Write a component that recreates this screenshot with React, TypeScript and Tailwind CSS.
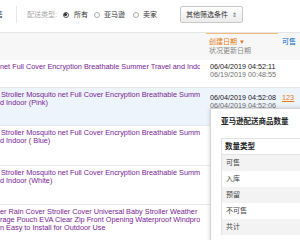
import React from "react";

function Radio({ checked, className }: { checked?: boolean; className?: string }) {
  return (
    <span
      className={
        "inline-flex items-center justify-center w-[6px] h-[6px] rounded-full border bg-white " +
        (checked ? "border-[#555] " : "border-[#aaa] ") +
        (className || "")
      }
    >
      {checked ? <span className="w-[3px] h-[3px] rounded-full bg-[#222]" /> : null}
    </span>
  );
}

type Row = {
  h: string;
  bg: string;
  lines: { t: string; ml: string }[];
  dates: string[];
  datePt: string;
  qty?: boolean;
};

const rows: Row[] = [
  {
    h: "h-[28px]",
    bg: "bg-white",
    lines: [{ t: "net Full Cover Encryption Breathable Summer Travel and Indoor", ml: "ml-0" }],
    dates: ["06/04/2019 04:52:11", "06/19/2019 00:48:55"],
    datePt: "pt-[3px]",
  },
  {
    h: "h-[38px]",
    bg: "bg-[#eef4fc]",
    lines: [
      { t: "Stroller Mosquito net Full Cover Encryption Breathable Summer", ml: "ml-[1px]" },
      { t: "d Indoor (Pink)", ml: "ml-0" },
    ],
    dates: ["06/04/2019 04:52:08", "06/04/2019 04:52:06"],
    datePt: "pt-[6px]",
    qty: true,
  },
  {
    h: "h-[40px]",
    bg: "bg-white",
    lines: [
      { t: "Stroller Mosquito net Full Cover Encryption Breathable Summer", ml: "ml-[1px]" },
      { t: "d Indoor ( Blue)", ml: "ml-0" },
    ],
    dates: ["06/04/2019 04:52:05", "06/04/2019 04:52:03"],
    datePt: "pt-[6px]",
  },
  {
    h: "h-[39px]",
    bg: "bg-white",
    lines: [
      { t: "Stroller Mosquito net Full Cover Encryption Breathable Summer", ml: "ml-[1px]" },
      { t: "d Indoor (White)", ml: "ml-0" },
    ],
    dates: ["06/04/2019 04:52:01", "06/04/2019 04:51:58"],
    datePt: "pt-[6px]",
  },
  {
    h: "h-[40px]",
    bg: "bg-white",
    lines: [
      { t: "er Rain Cover Stroller Cover Universal Baby Stroller Weather Shield", ml: "ml-0" },
      { t: "rage Pouch EVA Clear Zip Front Opening Waterproof Windproof", ml: "ml-0" },
      { t: "n Easy to Install for Outdoor Use", ml: "ml-0" },
    ],
    dates: ["06/04/2019 04:51:55", "06/04/2019 04:51:50"],
    datePt: "pt-[6px]",
  },
];

const qtyRows = [
  { t: "可售", bg: "bg-[#f3f3f3]" },
  { t: "入库", bg: "bg-white" },
  { t: "预留", bg: "bg-[#f3f3f3]" },
  { t: "不可售", bg: "bg-white" },
  { t: "共计", bg: "bg-[#f3f3f3]" },
];

export default function App() {
  return (
    <div className="relative w-[300px] h-[240px] overflow-hidden bg-white font-['Liberation_Sans','Noto_Sans_CJK_SC',sans-serif] text-[7px] leading-[8px] text-[#333]">
      {/* top filter bar */}
      <div className="h-[33px] border-b border-[#e6e6e6] flex items-center pb-[3px]">
        <span className="ml-[-4px]">售</span>
        <div className="ml-[13px] w-px h-[17px] bg-[#e8e8e8]" />
        <span className="ml-[10px] text-[#aaa]">配送类型:</span>
        <Radio checked className="ml-[6px]" />
        <span className="ml-[5px]">所有</span>
        <Radio className="ml-[6px]" />
        <span className="ml-[4px]">亚马逊</span>
        <Radio className="ml-[8px]" />
        <span className="ml-[4px] whitespace-nowrap">卖家</span>
        <button className="ml-[23px] h-[17px] px-[5px] border border-[#c8c8c8] rounded-[2px] bg-gradient-to-b from-white to-[#ececec] flex items-center text-[7px] leading-[8px] text-[#333] whitespace-nowrap">
          其他筛选条件
          <span className="ml-[4px] text-[6px] text-[#666]">⇕</span>
        </button>
      </div>

      {/* table header */}
      <div className="h-[27px] bg-[#f7f7f7] flex">
        <div className="w-[206px] shrink-0" />
        <div className="w-[72px] shrink-0 border-t border-[#f5b97a] pl-[3px] pt-[4px]">
          <div className="text-[#e47911] whitespace-nowrap">
            创建日期 <span className="text-[6px]">▼</span>
          </div>
          <div className="text-[#888] whitespace-nowrap mt-[1px]">状况更新日期</div>
        </div>
        <div className="pl-[4px] pt-[5px] text-[#0066c0] whitespace-nowrap">可售</div>
      </div>

      {/* rows */}
      {rows.map((r, i) => (
        <div key={i} className={"flex border-b border-[#e8e8e8] text-[7.3px] " + r.h + " " + r.bg}>
          <div className="w-[200px] shrink-0 overflow-hidden pt-[3px] text-[#7a2396]">
            {r.lines.map((l, j) => (
              <div key={j} className={"whitespace-nowrap " + l.ml}>
                {l.t}
              </div>
            ))}
          </div>
          <div className={"w-[72px] shrink-0 ml-[10px] text-[7.2px] " + r.datePt}>
            <div className="text-[#1a1a1a] whitespace-nowrap">{r.dates[0]}</div>
            <div className="text-[#707070] whitespace-nowrap">{r.dates[1]}</div>
          </div>
          {r.qty ? (
            <div className="pt-[6px] whitespace-nowrap flex">
              <span className="text-[#e47911] underline">123</span>
              <span className="ml-[5px] text-[5px] text-[#333]">▼</span>
            </div>
          ) : null}
        </div>
      ))}

      {/* popover */}
      <div className="absolute left-[210px] top-[108px] w-[100px] h-[140px] bg-white border border-[#d5d5d5] shadow-[0_0_4px_rgba(0,0,0,0.18)]">
        <div className="pl-[10px] pt-[8px] font-bold text-[7.5px] leading-[10px] text-[#222] whitespace-nowrap">
          亚马逊配送商品数量
        </div>
        <div className="ml-[10px] mt-[11px] border-t border-l border-[#e3e3e3]">
          <div className="h-[16px] flex items-center pl-[3px] font-bold text-[7.5px] text-[#222] border-b border-[#e3e3e3] bg-white">
            数量类型
          </div>
          {qtyRows.map((q, i) => (
            <div key={i} className={"h-[16px] flex items-center pl-[4px] text-[#444] " + q.bg}>
              {q.t}
            </div>
          ))}
        </div>
      </div>
    </div>
  );
}
